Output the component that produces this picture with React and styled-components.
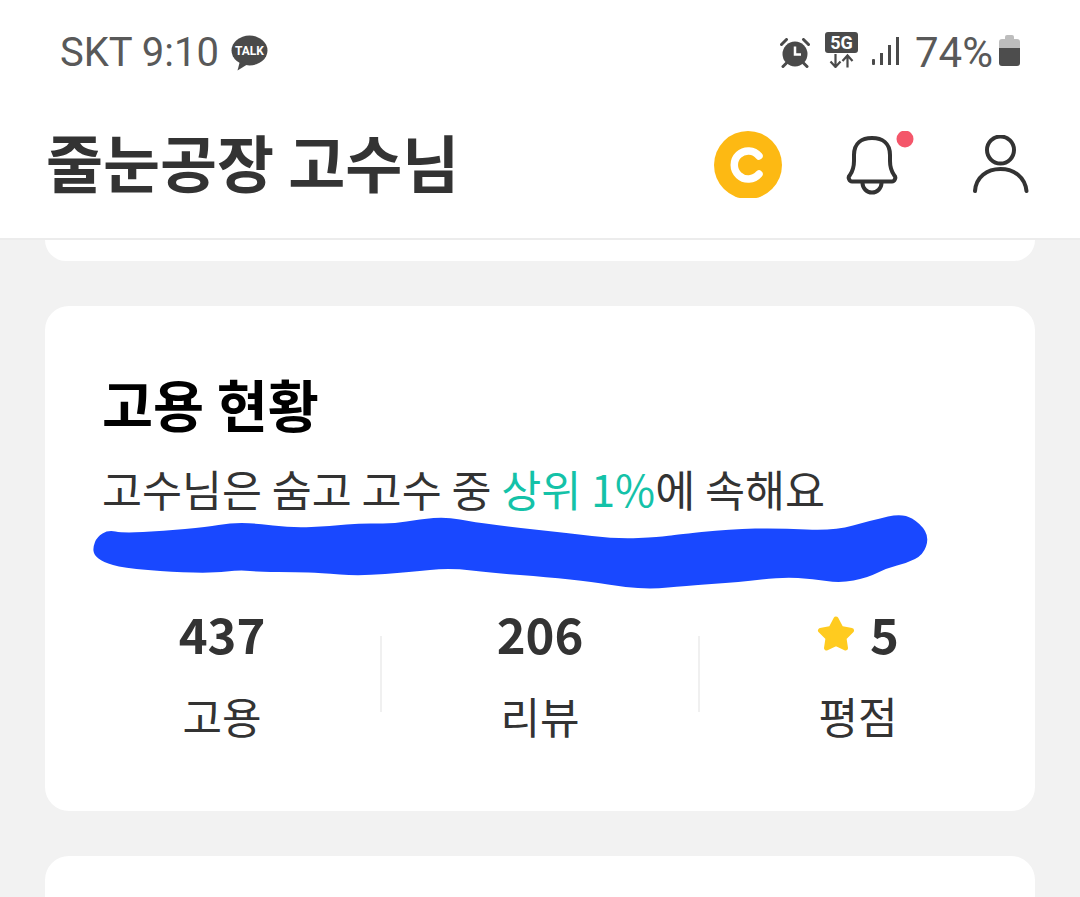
import React from "react";
import styled, { createGlobalStyle } from "styled-components";

const GlobalStyle = createGlobalStyle`
  html, body {
    margin: 0;
    padding: 0;
    background: #f2f2f2;
  }
  body {
    font-family: "Noto Sans CJK KR", "Noto Sans", sans-serif;
    overflow: hidden;
  }
`;

const stats = [
  { value: "437", label: "고용" },
  { value: "206", label: "리뷰" },
  { value: "5", label: "평점", star: true },
];

// outline of the marker stroke, traced clockwise from its left end
const scribblePoints = [
  [0, 33], [4, 23], [15, 16], [30, 19], [70, 17], [114, 13], [137, 9], [160, 9],
  [200, 14], [237, 12], [270, 9], [300, 10], [327, 5], [354, 3], [380, 8], [427, 14],
  [474, 19], [524, 25], [567, 23], [580, 21], [637, 15], [687, 14], [740, 17], [780, 6],
  [810, -1], [828, 10], [836, 24], [830, 41], [814, 49], [794, 54], [774, 64], [747, 69],
  [720, 65], [690, 63], [647, 68], [590, 72], [560, 75], [530, 73], [500, 68], [454, 63],
  [400, 59], [357, 54], [317, 58], [267, 62], [227, 59], [204, 58], [167, 58], [147, 56],
  [120, 59], [80, 58], [30, 54], [10, 48], [1, 41],
];

const smoothPath = (points) => {
  const mid = (a, b) => [(a[0] + b[0]) / 2, (a[1] + b[1]) / 2];
  const start = mid(points[points.length - 1], points[0]);
  let d = `M${start[0]} ${start[1]}`;
  points.forEach((p, i) => {
    const end = mid(p, points[(i + 1) % points.length]);
    d += ` Q${p[0]} ${p[1]} ${end[0]} ${end[1]}`;
  });
  return d + " Z";
};

const KakaoIcon = () => (
  <svg width="37" height="36" viewBox="0 0 37 36">
    <ellipse cx="18.5" cy="15.5" rx="18" ry="15" fill="#4a4a4a" />
    <path d="M9 26 L6.500 35.500 L17 29 Z" fill="#4a4a4a" />
    <text x="18.500" y="19.500" textAnchor="middle" fontSize="12" fontWeight="700" fill="#fff" fontFamily="Roboto, sans-serif">
      TALK
    </text>
  </svg>
);

const AlarmIcon = () => (
  <svg width="30" height="30" viewBox="0 0 30 30">
    <circle cx="15" cy="16" r="12.500" fill="#4a4a4a" />
    <path d="M15 8.500 V16.500 H21" fill="none" stroke="#fff" strokeWidth="2.500" />
    <path d="M1.500 6.500 L6.500 1.500 M28.500 6.500 L23.500 1.500" stroke="#4a4a4a" strokeWidth="3" strokeLinecap="round" />
    <path d="M6.500 25 L3 28.500 M23.500 25 L27 28.500" stroke="#4a4a4a" strokeWidth="3" strokeLinecap="round" />
  </svg>
);

const FiveGIcon = () => (
  <svg width="33" height="36" viewBox="0 0 33 36">
    <rect x="0" y="0" width="33" height="21" rx="3" fill="#4a4a4a" />
    <text x="16.500" y="17" textAnchor="middle" fontSize="18" fontWeight="700" fill="#fff" fontFamily="Roboto, sans-serif">
      5G
    </text>
    <path d="M10.500 22 V35 M5.500 29.500 L10.500 35 L15.500 29.500" fill="none" stroke="#4a4a4a" strokeWidth="2.200" />
    <path d="M22.500 35.500 V23.500 M17.500 29 L22.500 23.500 L27.500 29" fill="none" stroke="#4a4a4a" strokeWidth="2.200" />
  </svg>
);

const SignalIcon = () => (
  <svg width="27" height="28" viewBox="0 0 27 28">
    <rect x="0" y="22" width="3" height="6" rx="1" fill="#4a4a4a" />
    <rect x="8" y="16" width="3" height="12" fill="#4a4a4a" />
    <rect x="16" y="8" width="3" height="20" fill="#4a4a4a" />
    <rect x="24" y="0" width="3" height="28" fill="#4a4a4a" />
  </svg>
);

const BatteryIcon = () => (
  <svg width="21" height="31" viewBox="0 0 21 31">
    <path d="M6 4 V2 Q6 0 8 0 H13 Q15 0 15 2 V4 H18 Q21 4 21 7 V13 H0 V7 Q0 4 3 4 Z" fill="#bdbdbd" />
    <path d="M0 13 H21 V28 Q21 31 18 31 H3 Q0 31 0 28 Z" fill="#4d4d4d" />
  </svg>
);

const CoinIcon = () => (
  <svg width="68" height="67" viewBox="0 0 68 67">
    <circle cx="34" cy="34" r="34" fill="#fdb913" />
    <path d="M45 25 A14 14 0 1 0 45 43" fill="none" stroke="#fff" strokeWidth="7.500" strokeLinecap="round" />
  </svg>
);

const BellIcon = () => (
  <svg width="68" height="68" viewBox="0 0 68 68">
    <path
      d="M3 48 Q2 46 4 44 Q8 38 8 30 V24 C8 12 16 7 26 7 C36 7 44 12 44 24 V30 Q44 38 48 44 Q50 46 49 48 Q48 50.500 46 50.500 H6 Q4 50.500 3 48 Z"
      fill="none"
      stroke="#333"
      strokeWidth="4"
      strokeLinejoin="round"
    />
    <path d="M16.500 52 A9.500 9.500 0 0 0 35.500 52" fill="none" stroke="#333" strokeWidth="4" />
    <circle cx="59" cy="8" r="8.500" fill="#f4566a" />
  </svg>
);

const PersonIcon = () => (
  <svg width="56" height="60" viewBox="0 0 56 60">
    <circle cx="27.500" cy="15" r="13.500" fill="none" stroke="#333" strokeWidth="4" />
    <path d="M2 56 C3 42 14 34 27.500 34 C41 34 52 42 53.500 56" fill="none" stroke="#333" strokeWidth="4" strokeLinecap="round" />
  </svg>
);

const StarIcon = () => (
  <svg width="38" height="36" viewBox="0 0 38 36">
    <path
      d="M19 4 L24 13.500 L34.500 15.500 L27 23 L28.500 33 L19 28.500 L9.500 33 L11 23 L3.500 15.500 L14 13.500 Z"
      fill="#ffcb1f"
      stroke="#ffcb1f"
      strokeWidth="5"
      strokeLinejoin="round"
    />
  </svg>
);

const Scribble = () => (
  <ScribbleSvg width="838" height="77" viewBox="-1 -1 838 77">
    <path d={smoothPath(scribblePoints)} fill="#1948ff" />
  </ScribbleSvg>
);

export default function App() {
  return (
    <>
      <GlobalStyle />
      <Page>
        <Header>
          <StatusBar>
            <StatusGroup>
              <StatusText $size={40}>SKT 9:10</StatusText>
              <StatusSlot $gap={12}>
                <KakaoIcon />
              </StatusSlot>
            </StatusGroup>
            <StatusGroup>
              <AlarmIcon />
              <StatusSlot $gap={15} $up={6}>
                <FiveGIcon />
              </StatusSlot>
              <StatusSlot $gap={14} $up={4}>
                <SignalIcon />
              </StatusSlot>
              <StatusSlot $gap={16}>
                <StatusText $size={42}>74%</StatusText>
              </StatusSlot>
              <StatusSlot $gap={6} $up={4}>
                <BatteryIcon />
              </StatusSlot>
            </StatusGroup>
          </StatusBar>
          <TitleRow>
            <Title>줄눈공장 고수님</Title>
            <HeaderIcons>
              <CoinSlot>
                <CoinIcon />
              </CoinSlot>
              <BellIcon />
              <PersonSlot>
                <PersonIcon />
              </PersonSlot>
            </HeaderIcons>
          </TitleRow>
        </Header>
        <Content>
          <PartialCard />
          <Card>
            <CardTitle>고용 현황</CardTitle>
            <CardDesc>
              고수님은 숨고 고수 중 <Accent>상위 1%</Accent>에 속해요
            </CardDesc>
            <ScribbleSlot>
              <Scribble />
            </ScribbleSlot>
            <StatRow>
              {stats.map((stat) => (
                <StatCell key={stat.label}>
                  <StatValue>
                    {stat.star && <StarIcon />}
                    {stat.value}
                  </StatValue>
                  <StatLabel>{stat.label}</StatLabel>
                </StatCell>
              ))}
            </StatRow>
          </Card>
          <NextCard />
        </Content>
      </Page>
    </>
  );
}

const Page = styled.div`
  width: 1080px;
  height: 897px;
  overflow: hidden;
  background: #f2f2f2;
`;

const Header = styled.header`
  height: 238px;
  background: #fff;
  border-bottom: 2px solid #ececec;
`;

const StatusBar = styled.div`
  display: flex;
  justify-content: space-between;
  align-items: center;
  height: 37px;
  padding: 34px 60px 0 60px;
`;

const StatusGroup = styled.div`
  display: flex;
  align-items: center;
  gap: 14px;
`;

const StatusSlot = styled.div`
  display: flex;
  margin-left: ${(p) => p.$gap - 14}px;
  margin-bottom: ${(p) => p.$up || 0}px;
`;

const StatusText = styled.span`
  font-family: Roboto, sans-serif;
  font-size: ${(p) => p.$size}px;
  font-weight: 400;
  line-height: 37px;
  color: #595959;
`;

const TitleRow = styled.div`
  display: flex;
  justify-content: space-between;
  align-items: flex-start;
  height: 68px;
  margin-top: 60px;
  padding: 0 51px 0 46px;
`;

const Title = styled.h1`
  margin: -4px 0 0;
  font-size: 62px;
  line-height: 68px;
  font-weight: 700;
  color: #333;
  white-space: nowrap;
`;

const HeaderIcons = styled.div`
  display: flex;
  align-items: flex-start;
  gap: 59px;
`;

const CoinSlot = styled.div`
  display: flex;
  margin-right: 5px;
`;

const PersonSlot = styled.div`
  display: flex;
  margin-top: 4px;
`;

const Content = styled.main`
  display: flex;
  flex-direction: column;
  gap: 45px;
  padding: 0 45px;
`;

const PartialCard = styled.div`
  height: 21px;
  background: #fff;
  border-radius: 0 0 24px 24px;
`;

const Card = styled.section`
  height: 505px;
  box-sizing: border-box;
  padding: 69px 58px 0;
  background: #fff;
  border-radius: 24px;
`;

const NextCard = styled.div`
  height: 80px;
  background: #fff;
  border-radius: 24px 24px 0 0;
`;

const CardTitle = styled.h2`
  margin: 0 0 0 -1px;
  font-size: 55.500px;
  line-height: 56px;
  font-weight: 700;
  color: #000;
  white-space: nowrap;
`;

const CardDesc = styled.p`
  margin: 32px 0 0 -1px;
  font-size: 43.500px;
  line-height: 52px;
  color: #333;
  white-space: nowrap;
`;

const Accent = styled.span`
  color: #14c2a8;
`;

const ScribbleSlot = styled.div`
  position: relative;
  height: 88px;
`;

const ScribbleSvg = styled.svg`
  position: absolute;
  left: -11px;
  top: -2px;
  filter: blur(0.5px);
`;

const StatRow = styled.div`
  display: grid;
  grid-template-columns: repeat(3, 1fr);
  margin: 0 -40px;
`;

const StatCell = styled.div`
  display: flex;
  flex-direction: column;
  align-items: center;
  position: relative;

  & + &::before {
    content: "";
    position: absolute;
    left: -1px;
    top: 33px;
    height: 76px;
    width: 2px;
    background: #f0f0f0;
  }
`;

const StatValue = styled.div`
  display: flex;
  align-items: center;
  gap: 15px;
  font-size: 49px;
  line-height: 60px;
  font-weight: 700;
  color: #333;
`;

const StatLabel = styled.div`
  margin-top: 26px;
  font-size: 43px;
  line-height: 52px;
  color: #333;
`;
